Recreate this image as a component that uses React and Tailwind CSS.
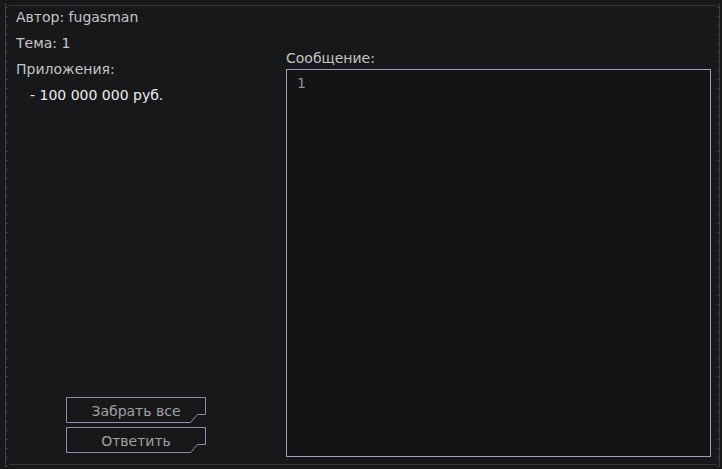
import React from 'react';

const ActionButton = ({ label }) => (
  <button className="relative w-[140px] h-[26px] pt-[2px] text-[14px] leading-[24px] text-[#a0a0a0] text-center">
    <svg className="absolute inset-0" width="140" height="26" viewBox="0 0 140 26">
      <polygon
        points="0.5,0.5 139.5,0.5 139.5,17.5 131.5,17.5 124.5,25.5 0.5,25.5"
        fill="none"
        stroke="#8c8eb4"
        strokeWidth="1"
      />
    </svg>
    <span className="relative">{label}</span>
  </button>
);

const App = () => {
  return (
    <div
      className="w-[722px] h-[469px] bg-[#17181a] flex text-[14px] text-[#c4c4c4]"
      style={{ fontFamily: '"DejaVu Sans", sans-serif' }}
    >
      {/* left ruler */}
      <div className="w-[9px] pl-[5px] pt-[3px] pb-[2px] flex">
        <div className="w-[3px] border-l border-[#3b4052] bg-[repeating-linear-gradient(to_bottom,transparent_0_4px,#3b4052_4px_5px,transparent_5px_9px)]" />
      </div>

      {/* main frame */}
      <div className="flex-1 flex flex-col">
        <div className="mt-[5px] h-px bg-[#36383b]" />

        <div className="flex-1 flex pl-[7px] pr-[5px]">
          <div className="w-[270px] flex flex-col justify-between pb-[11px]">
            <div className="flex flex-col gap-[4px] leading-[22px]">
              <div>Автор: fugasman</div>
              <div>Тема: 1</div>
              <div>Приложения:</div>
              <div className="pl-[14px] text-[#ececec]">- 100 000 000 руб.</div>
            </div>
            <div className="flex flex-col gap-[4px] pl-[50px]">
              <ActionButton label="Забрать все" />
              <ActionButton label="Ответить" />
            </div>
          </div>

          <div className="flex-1 flex flex-col pt-[41px] pb-[7px]">
            <div className="leading-[22px]">Сообщение:</div>
            <div className="flex-1 border border-[#9c9ec8] bg-[#131416] px-[10px] pt-[3px] leading-[20px] text-[#8e8e8e]">
              1
            </div>
          </div>
        </div>

        <div className="mb-[4px] h-px bg-[#36383b]" />
      </div>

      {/* right ruler */}
      <div className="w-[6px] pr-[2px] pt-[3px] pb-[2px] flex justify-end">
        <div className="w-[3px] border-r border-[#3b3d42] bg-[repeating-linear-gradient(to_bottom,transparent_0_4px,#3b3d42_4px_5px,transparent_5px_9px)]" />
      </div>
    </div>
  );
};

export default App;
